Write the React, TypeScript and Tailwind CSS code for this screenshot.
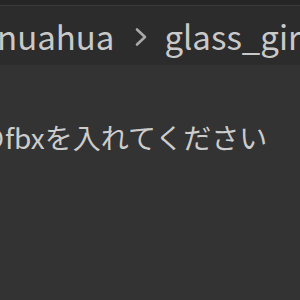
const App = () => {
  return (
    <div className="w-[300px] h-[300px] overflow-hidden bg-[#333333] flex flex-col" style={{ fontFamily: '"Noto Sans CJK JP", "Liberation Sans", sans-serif' }}>
      <div className="h-[6px] bg-[#262626] border-b border-[#3a3a3a]" />
      <div className="h-[59px] bg-[#2c2c2c] flex items-center whitespace-nowrap text-[33px] text-[#c9c9c9] pt-[3px]">
        <span className="-ml-[3px]">nuahua</span>
        <svg className="ml-[20px] mr-[16px] shrink-0" width="14" height="20" viewBox="0 0 14 20" fill="none">
          <path d="M3 2.5 L11 10 L3 17.5" stroke="#a9a9a9" strokeWidth="2.6" strokeLinecap="round" strokeLinejoin="round" />
        </svg>
        <span>glass_girl</span>
      </div>
      <div className="pt-[54px] whitespace-nowrap text-[28px] text-[#cccccc] leading-[36px]">
        <span className="-ml-[23px]">のfbxを入れてください</span>
      </div>
    </div>
  );
};

export default App;
